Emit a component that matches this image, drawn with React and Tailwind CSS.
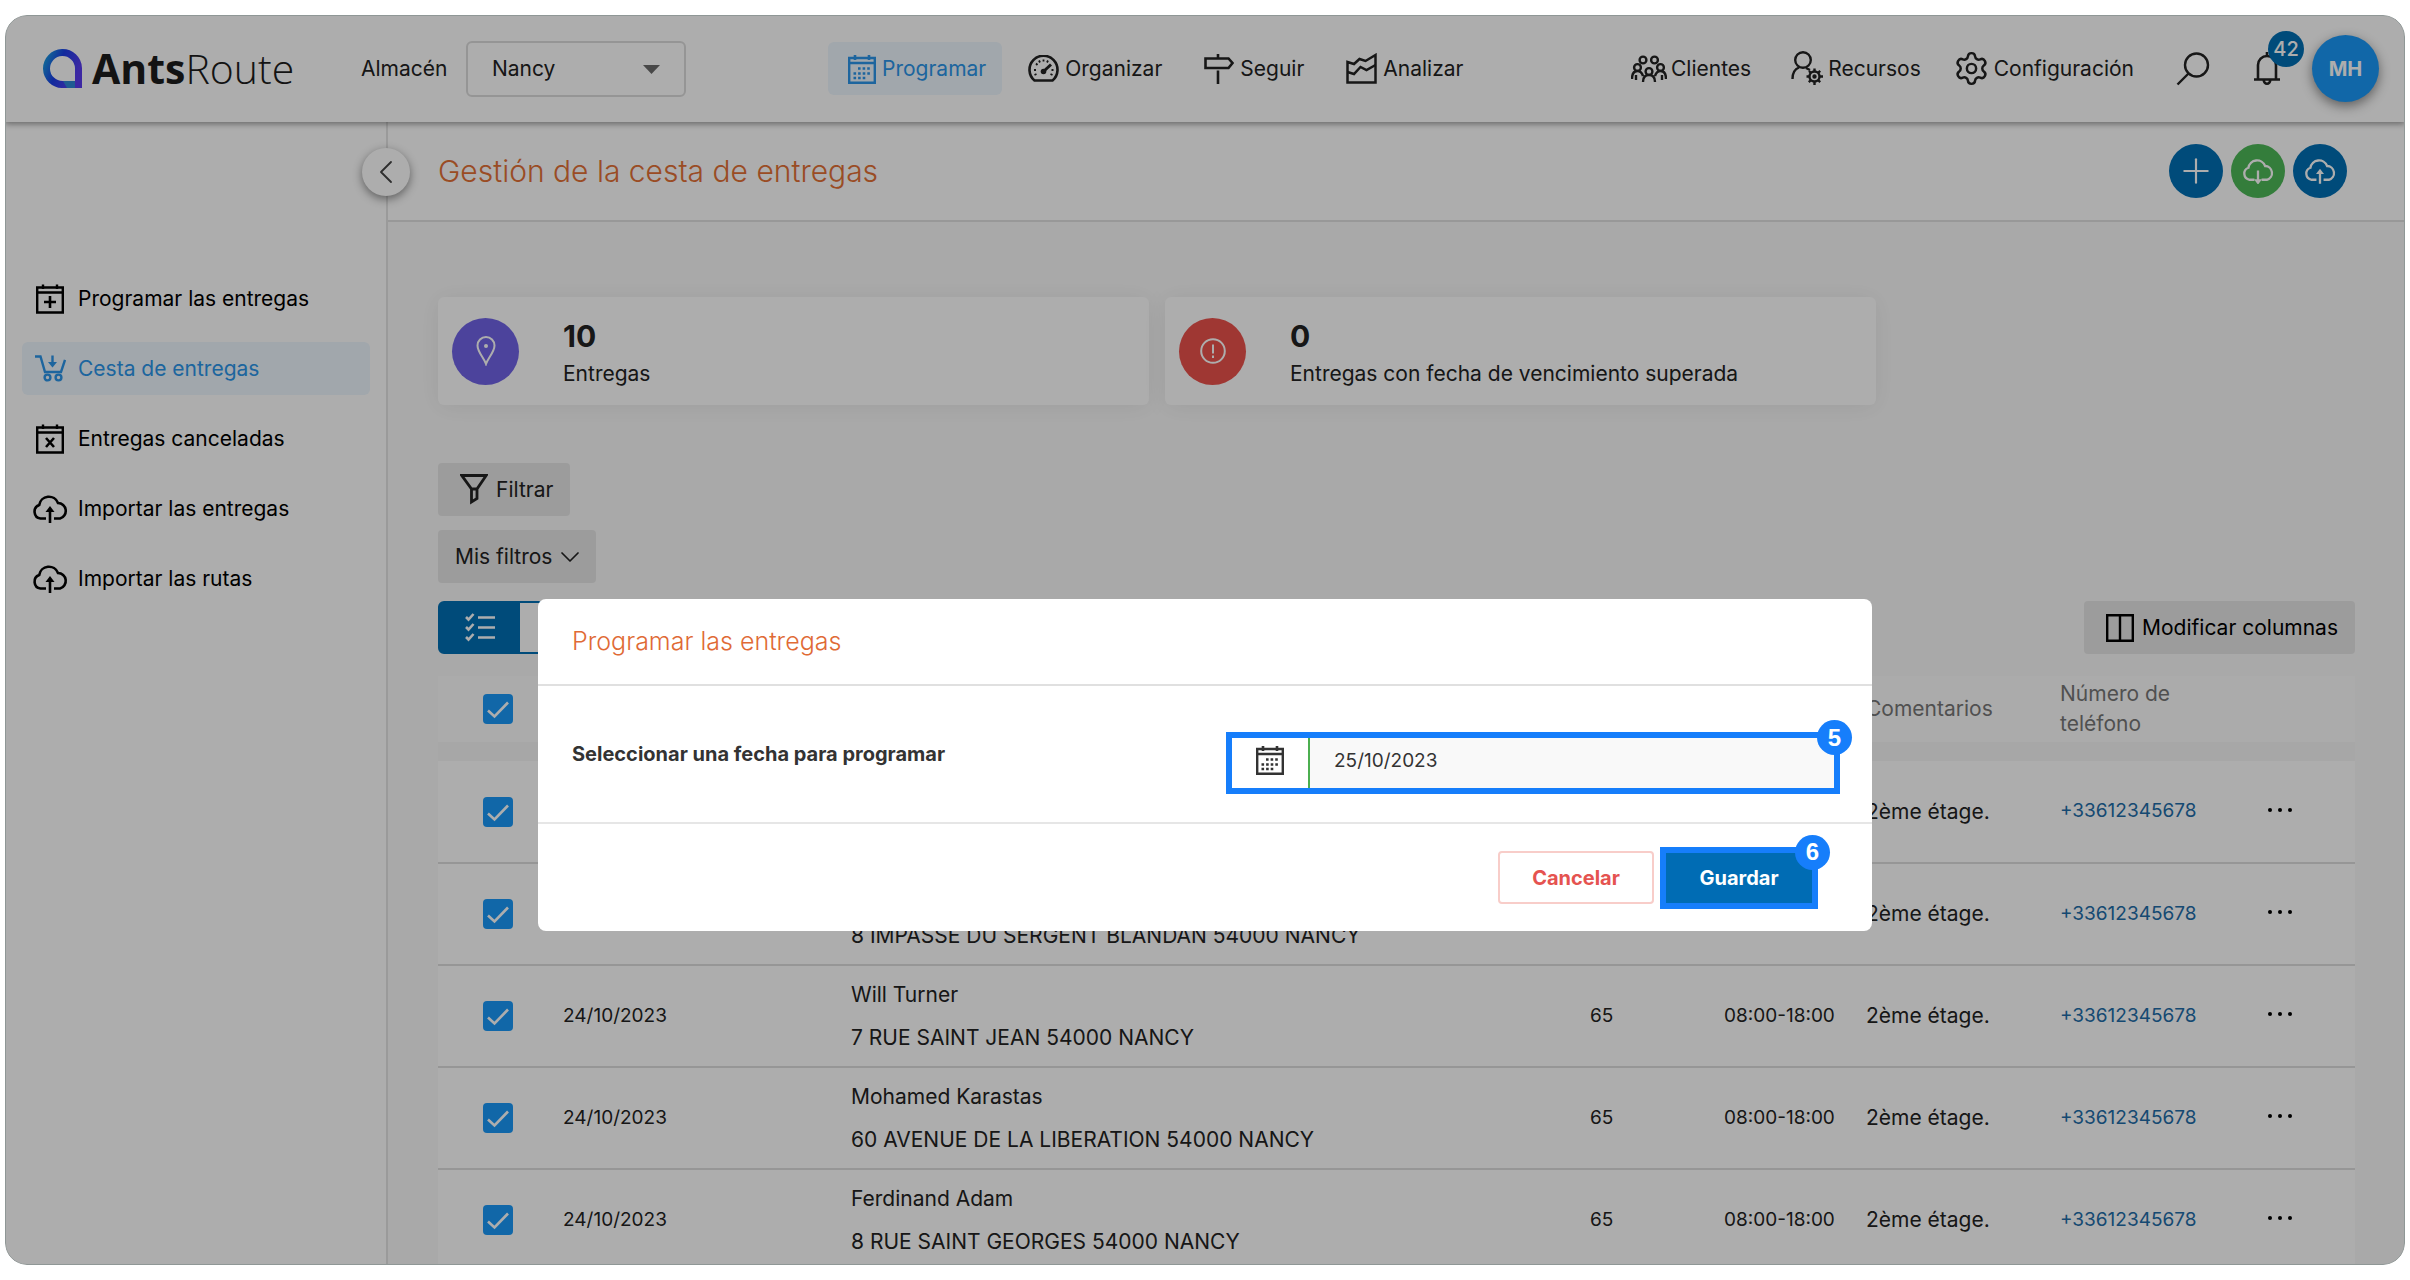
import React, { useState } from 'react';
import { ChevronDown, ChevronLeft, Plus, Settings } from 'lucide-react';

const CalendarIcon = ({ className }) => (
  <svg className={className} width="28" height="30" viewBox="0 0 28 30" fill="none" stroke="currentColor" strokeWidth="2.4">
    <path d="M1.200 4H26.800V28.800H1.200ZM1 9H27" />
    <path d="M7 1V6M21 1V6" strokeWidth="2.6" />
    <path d="M10 14.500H22M5.500 19.500H22M5.500 24H17.500" strokeWidth="2.6" strokeDasharray="2.6 2" />
  </svg>
);

const GaugeIcon = () => (
  <svg width="31" height="27" viewBox="0 0 31 27" fill="none" stroke="currentColor" strokeWidth="2.6">
    <path d="M6.500 25.500A14 14 0 1 1 24.500 25.500Z" strokeLinejoin="round" />
    <path d="M15.500 16.500L23 9.500" strokeWidth="3" />
    <circle cx="15.500" cy="16.500" r="2.800" fill="currentColor" stroke="none" />
    <path d="M6 15h2M8 8.500l1.500 1.500M15.500 4.500v2M11 5.500l1 2M20 5.500l-1 2M23.500 15h2M6.500 20l2-1M24.500 20l-2-1" strokeWidth="1.800" />
  </svg>
);

const SignpostIcon = () => (
  <svg width="30" height="30" viewBox="0 0 30 30" fill="none" stroke="currentColor" strokeWidth="2.6">
    <path d="M1.500 4.500H24.500L28.500 9L24.500 14H1.500ZM14 0V4.500M14 16.500V30" />
  </svg>
);

const ChartIcon = () => (
  <svg width="31" height="31" viewBox="0 0 31 31" fill="none" stroke="currentColor" strokeWidth="2.5">
    <path d="M1.500 9L8 11L13.500 6L19.500 8L29.500 2V29.500H1.500Z" />
    <path d="M1.500 19L8 21L14.500 14L20.500 17L29.500 12" />
  </svg>
);

const ClientsIcon = () => (
  <svg width="36" height="28" viewBox="0 0 36 28" fill="none" stroke="currentColor" strokeWidth="2.4">
    <circle cx="12" cy="5" r="3.400" />
    <circle cx="23.500" cy="5" r="3.400" />
    <circle cx="6.500" cy="12.500" r="3.400" />
    <circle cx="29.500" cy="12.500" r="3.400" />
    <circle cx="18" cy="16.500" r="3.400" />
    <path d="M1 24C1 18 3 16 6.500 16S11 18 12 21M35 24C35 18 33 16 29.500 16S25 18 24 21M12 27C12 22 14.500 20 18 20S24 22 24 27M5 20V25M31 20V25" />
  </svg>
);

const ResourcesIcon = () => (
  <svg width="33" height="35" viewBox="0 0 33 35" fill="none" stroke="currentColor" strokeWidth="2.400">
    <circle cx="12" cy="9" r="7.800" />
    <path d="M1.500 28C1.500 21 4 18 8 16.500M15 17L19 19" />
    <circle cx="23.500" cy="25.500" r="5" />
    <circle cx="23.500" cy="25.500" r="1" fill="currentColor" />
    <path d="M23.500 17.500V20M23.500 31V34M15.500 25.500H18M29 25.500H32M18 20L19.500 21.500M27.500 29.500L29.200 31.200M29.200 19.800L27.500 21.500M19.500 29.500L17.800 31.200" />
  </svg>
);

const SearchIcon = () => (
  <svg width="34" height="34" viewBox="0 0 34 34" fill="none" stroke="currentColor" strokeWidth="2.400">
    <circle cx="20.500" cy="13" r="11.500" />
    <path d="M12.500 21.500L1.500 32.500" />
  </svg>
);

const BellIcon = () => (
  <svg width="26" height="34" viewBox="0 0 26 34" fill="none" stroke="currentColor" strokeWidth="2.600">
    <path d="M4 27.500V13A9 9 0 0 1 22 13V27.500M0 27.500H26M13 0V4" />
    <path d="M9.800 28A3.200 3.800 0 0 0 16.200 28" />
  </svg>
);

const CloudIcon = ({ down, width = 36, strokeWidth = 2.6 }) => (
  <svg width={width} viewBox="0 0 36 30" fill="none" stroke="currentColor" strokeWidth={strokeWidth}>
    <path d="M14 24.500H8.500A7 7 0 0 1 7.200 11A9.800 9.800 0 0 1 26 9A7.900 7.900 0 0 1 28 24.500H22" />
    {down ? (
      <>
        <path d="M18 14V26" />
        <path d="M13.500 24L18 30L22.500 24Z" fill="currentColor" stroke="none" />
      </>
    ) : (
      <>
        <path d="M18 29V17" />
        <path d="M13.500 18L18 12L22.500 18Z" fill="currentColor" stroke="none" />
      </>
    )}
  </svg>
);

const BoxCalendarIcon = ({ mark }) => (
  <svg width="28" height="30" viewBox="0 0 28 30" fill="none" stroke="currentColor" strokeWidth="2.400">
    <path d="M1.200 3.500H26.800V28.500H1.200ZM1.200 8.500H26.800M7 0.500V5M21 0.500V5" />
    {mark === 'plus' ? (
      <path d="M14 12V24M8 18H20" strokeWidth="2.600" />
    ) : (
      <path d="M10 14L18 23M18 14L10 23" strokeWidth="2.600" />
    )}
  </svg>
);

const CartIcon = () => (
  <svg width="31" height="27" viewBox="0 0 31 27" fill="none" stroke="currentColor" strokeWidth="2.400">
    <path d="M0 1.500H5.500L10 17H26L30 5" />
    <circle cx="12.500" cy="22.500" r="2.900" />
    <circle cx="23.500" cy="22.500" r="2.900" />
    <path d="M17.500 0.500V9" />
    <path d="M13 7H22L17.500 12.500Z" fill="currentColor" stroke="none" />
  </svg>
);

const FunnelIcon = () => (
  <svg width="28" height="31" viewBox="0 0 28 31" fill="none" stroke="currentColor" strokeWidth="2.800">
    <path d="M1.800 1.500H26.200L17 15V24.500L11.500 28V15ZM11.500 15H17" />
  </svg>
);

const ChecklistIcon = () => (
  <svg width="30" height="29" viewBox="0 0 30 29" fill="none" stroke="currentColor" strokeWidth="2.600">
    <path d="M1 4L3.500 6.500L8.500 1M1 14L3.500 16.500L8.500 11M1 24L3.500 26.500L8.500 21M13 4.500H30M13 14.500H30M13 24.500H30" />
  </svg>
);

const ColumnsIcon = () => (
  <svg width="28" height="28" viewBox="0 0 28 28" fill="none" stroke="currentColor" strokeWidth="2.400">
    <path d="M1.200 1.200H26.800V26.800H1.200ZM14 1.200V26.800" />
  </svg>
);

const PinIcon = () => (
  <svg width="20" height="30" viewBox="0 0 20 30" fill="none" stroke="currentColor" strokeWidth="2">
    <path d="M10 28C8 22 1.500 16 1.500 9.500A8.500 8.500 0 0 1 18.500 9.500C18.500 16 12 22 10 28Z" />
    <circle cx="10" cy="10" r="2" fill="currentColor" stroke="none" />
  </svg>
);

const AlertIcon = () => (
  <svg width="26" height="26" viewBox="0 0 26 26" fill="none" stroke="currentColor" strokeWidth="2">
    <circle cx="13" cy="13" r="11.800" />
    <path d="M13 6.500V15.500M13 17.500V20" />
  </svg>
);

const Logo = () => (
  <a href="#" className="flex items-center gap-2.5 w-[318px]">
    <svg width="39" height="39" viewBox="0 0 39 39" fill="none">
      <defs>
        <linearGradient id="ring" x1="0" y1="0.200" x2="1" y2="0.600">
          <stop offset="0" stopColor="#1a8fe0" />
          <stop offset="0.400" stopColor="#1a3fe8" />
          <stop offset="1" stopColor="#5a3cf0" />
        </linearGradient>
      </defs>
      <path d="M20 35.500A16 16 0 1 1 35.500 19V35.500Z" stroke="url(#ring)" strokeWidth="7" />
      <path d="M20 32H32V39H24Z" fill="#2f86d8" />
    </svg>
    <span className="font-['Open_Sans'] text-[41px] leading-none text-[#1c1c1c] font-light">
      <b className="font-bold">Ants</b>Route
    </span>
  </a>
);

const mainNav = [
  { label: 'Programar', icon: <CalendarIcon />, active: true },
  { label: 'Organizar', icon: <GaugeIcon /> },
  { label: 'Seguir', icon: <SignpostIcon /> },
  { label: 'Analizar', icon: <ChartIcon /> },
];

const sideNav = [
  { label: 'Programar las entregas', icon: <BoxCalendarIcon mark="plus" /> },
  { label: 'Cesta de entregas', icon: <CartIcon />, active: true },
  { label: 'Entregas canceladas', icon: <BoxCalendarIcon mark="x" /> },
  { label: 'Importar las entregas', icon: <CloudIcon /> },
  { label: 'Importar las rutas', icon: <CloudIcon /> },
];

const deliveries = [
  { id: 1, name: '', address: '' },
  { id: 2, name: '', address: '8 IMPASSE DU SERGENT BLANDAN 54000 NANCY' },
  { id: 3, name: 'Will Turner', address: '7 RUE SAINT JEAN 54000 NANCY' },
  { id: 4, name: 'Mohamed Karastas', address: '60 AVENUE DE LA LIBERATION 54000 NANCY' },
  { id: 5, name: 'Ferdinand Adam', address: '8 RUE SAINT GEORGES 54000 NANCY' },
];

const TopBar = () => (
  <header className="relative z-10 flex items-center h-[107px] shrink-0 pl-[38px] pr-[26px] bg-white shadow-[0_2px_6px_rgba(0,0,0,0.4)]">
    <Logo />
    <label htmlFor="depot" className="w-[105px]">Almacén</label>
    <div className="relative w-[220px]">
      <select
        id="depot"
        className="appearance-none w-full h-14 pl-6 bg-white border-2 border-[#dcdcdc] rounded-md"
      >
        <option>Nancy</option>
      </select>
      <svg className="absolute right-[26px] top-6 pointer-events-none" width="17" height="9" viewBox="0 0 17 9">
        <path d="M0 0H17L8.500 9Z" fill="#6b6b6b" />
      </svg>
    </div>
    <nav className="flex gap-1.5 ml-[142px]">
      {mainNav.map((item) => (
        <a
          key={item.label}
          href="#"
          className={`flex items-center gap-1.5 h-[53px] pl-5 pr-4 rounded-md ${item.active ? 'bg-[#edf6fe] text-[#2b95e9]' : ''}`}
        >
          {item.icon}
          {item.label}
        </a>
      ))}
    </nav>
    <div className="flex items-center ml-auto">
      <a href="#" className="flex items-center gap-1 mr-10"><ClientsIcon />Clientes</a>
      <a href="#" className="flex items-center gap-1 mr-8"><ResourcesIcon />Recursos</a>
      <a href="#" className="flex items-center gap-1 mr-[42px]">
        <Settings size={37} strokeWidth={1.6} />Configuración
      </a>
      <button type="button" aria-label="Buscar" className="mr-[44px]"><SearchIcon /></button>
      <button type="button" aria-label="Notificaciones" className="relative mr-8">
        <BellIcon />
        <span className="absolute -top-[21px] left-[14px] flex items-center justify-center w-9 h-9 rounded-full bg-[#006fb4] text-white text-xl font-medium">
          42
        </span>
      </button>
      <button type="button" className="w-[67px] h-[67px] rounded-full bg-[#1a99f8] text-white text-xl font-bold shadow-[0_4px_12px_rgba(0,0,0,0.45)]">
        MH
      </button>
    </div>
  </header>
);

const Sidebar = () => (
  <aside className="relative w-[383px] shrink-0 bg-white border-r-2 border-[#e4e4e4]">
    <nav className="flex flex-col gap-[17px] pt-[150px] pl-[17px] pr-4">
      {sideNav.map((item) => (
        <a
          key={item.label}
          href="#"
          className={`flex items-center h-[53px] pl-2.5 rounded-md ${item.active ? 'bg-[#edf6fe] text-[#2b95e9]' : 'text-black'}`}
        >
          <span className="flex justify-center w-9 mr-2.5">{item.icon}</span>
          {item.label}
        </a>
      ))}
    </nav>
    <button
      type="button"
      aria-label="Contraer menú"
      className="absolute top-[26px] -right-6 z-10 flex items-center justify-center w-12 h-12 rounded-full bg-white text-[#444] shadow-[0_3px_10px_rgba(0,0,0,0.45)]"
    >
      <ChevronLeft size={40} strokeWidth={1.1} />
    </button>
  </aside>
);

const StatCard = ({ icon, color, value, label }) => (
  <div className="flex items-center gap-11 w-[711px] h-[108px] px-3.5 bg-white rounded-md shadow-[0_2px_24px_rgba(0,0,0,0.07)]">
    <div className={`flex items-center justify-center w-[67px] h-[67px] rounded-full text-white ${color}`}>
      {icon}
    </div>
    <div className="pt-1.5">
      <p className="text-3xl leading-9 font-bold">{value}</p>
      <p className="mt-1 leading-8">{label}</p>
    </div>
  </div>
);

const Checkbox = ({ label }) => {
  const [checked, setChecked] = useState(true);
  return (
    <label className="grid ml-[45px] w-[30px] h-[30px]">
      <input
        type="checkbox"
        aria-label={label}
        checked={checked}
        onChange={() => setChecked(!checked)}
        className="appearance-none col-start-1 row-start-1 w-[30px] h-[30px] rounded bg-[#1a99f8]"
      />
      {checked && (
        <svg className="col-start-1 row-start-1 pointer-events-none" width="30" height="30" viewBox="0 0 30 30" fill="none">
          <path d="M5 16.500L11.500 22.500L25 8.500" stroke="#fff" strokeWidth="2.600" />
        </svg>
      )}
    </label>
  );
};

const DeliveryTable = () => (
  <table className="w-full mt-[22px] table-fixed text-left">
    <colgroup>
      <col className="w-[125px]" />
      <col className="w-[288px]" />
      <col />
      <col className="w-[134px]" />
      <col className="w-[142px]" />
      <col className="w-[194px]" />
      <col className="w-[208px]" />
      <col className="w-[87px]" />
    </colgroup>
    <thead className="bg-[#fdfdfd] text-[#777]">
      <tr className="h-[66px]">
        <th><Checkbox label="Seleccionar todo" /></th>
        <th />
        <th />
        <th />
        <th />
        <th className="font-normal">Comentarios</th>
        <th className="font-normal pr-20 leading-[30px]">Número de teléfono</th>
        <th />
      </tr>
    </thead>
    <tbody>
      <tr aria-hidden="true" className="h-[19px] bg-[#f6f6f6]"><td colSpan={8} /></tr>
      {deliveries.map((d) => (
        <tr key={d.id} className="h-[102px] bg-white border-b-2 border-[#dedede]">
          <td><Checkbox label={`Seleccionar entrega ${d.id}`} /></td>
          <td className="text-[19px]">24/10/2023</td>
          <td className="leading-[43px]">
            <p className="h-[43px]">{d.name}</p>
            <p className="h-[43px] whitespace-nowrap">{d.address}</p>
          </td>
          <td className="text-[19px]">65</td>
          <td className="text-[19px]">08:00-18:00</td>
          <td>2ème étage.</td>
          <td className="text-[19px]"><a href="tel:+33612345678" className="text-[#216ca8]">+33612345678</a></td>
          <td>
            <button type="button" aria-label="Más acciones" className="flex gap-1.5 pb-1">
              <span className="w-1 h-1 rounded-full bg-black" />
              <span className="w-1 h-1 rounded-full bg-black" />
              <span className="w-1 h-1 rounded-full bg-black" />
            </button>
          </td>
        </tr>
      ))}
    </tbody>
  </table>
);

const StepBadge = ({ children }) => (
  <span className="absolute -top-[18px] -right-[18px] flex items-center justify-center w-[35px] h-[35px] rounded-full bg-[#167efb] text-white font-['Liberation_Sans'] text-2xl leading-none font-bold">
    {children}
  </span>
);

const ScheduleDialog = () => {
  const [date, setDate] = useState('25/10/2023');
  return (
    <div role="dialog" aria-labelledby="schedule-title" className="w-full max-w-[1334px] bg-white rounded-lg text-[#333]">
      <h2 id="schedule-title" className="flex items-center h-[87px] px-[34px] border-b-2 border-[#e0e0e0] text-[25px] font-light text-[#e06a35]">
        Programar las entregas
      </h2>
      <div className="flex items-start justify-between h-[138px] pl-[34px] pr-8 border-b-2 border-[#e6e6e6]">
        <label htmlFor="schedule-date" className="mt-[54px] text-xl font-bold">
          Seleccionar una fecha para programar
        </label>
        <div className="relative flex w-[614px] h-[62px] mt-[46px] border-[6px] border-[#167efb]">
          <span className="flex items-center justify-center w-[78px] pb-1.5 border-r-2 border-[#4caf50]">
            <CalendarIcon />
          </span>
          <input
            id="schedule-date"
            type="text"
            value={date}
            onChange={(e) => setDate(e.target.value)}
            className="flex-1 min-w-0 px-6 pb-1 bg-[#f9f9f9] text-[19px] outline-none"
          />
          <StepBadge>5</StepBadge>
        </div>
      </div>
      <div className="flex items-center justify-end gap-1.5 h-[107px] pr-[54px]">
        <button type="button" className="w-[156px] h-[53px] border-2 border-[#f8cdc9] rounded text-xl font-bold text-[#e55350]">
          Cancelar
        </button>
        <button type="button" className="relative w-[158px] h-[62px] border-[6px] border-[#167efb] bg-[#006cb4] text-xl font-bold text-white">
          Guardar
          <StepBadge>6</StepBadge>
        </button>
      </div>
    </div>
  );
};

export default function App() {
  return (
    <div className="h-screen px-[5px] py-[15px] bg-white font-['Inter',sans-serif] text-[21px] text-[#222]">
      <div className="relative flex flex-col h-full overflow-hidden rounded-[22px] bg-[#fafafa]">
        <TopBar />
        <div className="flex flex-1 min-h-0">
          <Sidebar />
          <main className="flex-1 min-w-0">
            <div className="flex items-center justify-between h-[100px] pl-[50px] pr-[58px] bg-white border-b-2 border-[#e0e0e0]">
              <h1 className="text-3xl font-light text-[#e37035]">Gestión de la cesta de entregas</h1>
              <div className="flex gap-2 text-white">
                <button type="button" aria-label="Añadir" className="flex items-center justify-center w-[54px] h-[54px] rounded-full bg-[#006fb4]">
                  <Plus size={40} strokeWidth={1.3} />
                </button>
                <button type="button" aria-label="Descargar" className="flex items-center justify-center w-[54px] h-[54px] rounded-full bg-[#4db858]">
                  <CloudIcon down width={32} />
                </button>
                <button type="button" aria-label="Importar" className="flex items-center justify-center w-[54px] h-[54px] rounded-full bg-[#006fb4]">
                  <CloudIcon width={32} />
                </button>
              </div>
            </div>
            <div className="flex flex-col items-start pl-[50px] pr-[50px] pt-[75px]">
              <div className="flex gap-4">
                <StatCard icon={<PinIcon />} color="bg-[#7064e6]" value="10" label="Entregas" />
                <StatCard icon={<AlertIcon />} color="bg-[#eb514c]" value="0" label="Entregas con fecha de vencimiento superada" />
              </div>
              <button type="button" className="flex items-center gap-2 h-[53px] mt-[58px] px-[22px] pr-[17px] rounded bg-[#e6e6e6]">
                <FunnelIcon />
                Filtrar
              </button>
              <button type="button" className="flex items-center gap-0.5 h-[53px] mt-3.5 pl-[17px] pr-2.5 rounded bg-[#e6e6e6]">
                Mis filtros
                <ChevronDown size={32} strokeWidth={1.3} />
              </button>
              <div className="flex items-center justify-between w-full mt-[18px]">
                <div className="flex h-[53px] border-2 border-[#006fb4] rounded-md bg-white">
                  <button type="button" aria-label="Lista" className="flex items-center justify-center w-20 bg-[#006fb4] text-white">
                    <ChecklistIcon />
                  </button>
                  <button type="button" aria-label="Mapa" className="w-20" />
                </div>
                <button type="button" className="flex items-center gap-2 h-[53px] pl-[22px] pr-[17px] rounded bg-[#e6e6e6] text-black">
                  <ColumnsIcon />
                  Modificar columnas
                </button>
              </div>
              <DeliveryTable />
            </div>
          </main>
        </div>
        <div className="absolute inset-0 z-20 flex items-start justify-center pt-[583px] rounded-[22px] border border-[#8f9796] bg-black/32">
          <ScheduleDialog />
        </div>
      </div>
    </div>
  );
}
